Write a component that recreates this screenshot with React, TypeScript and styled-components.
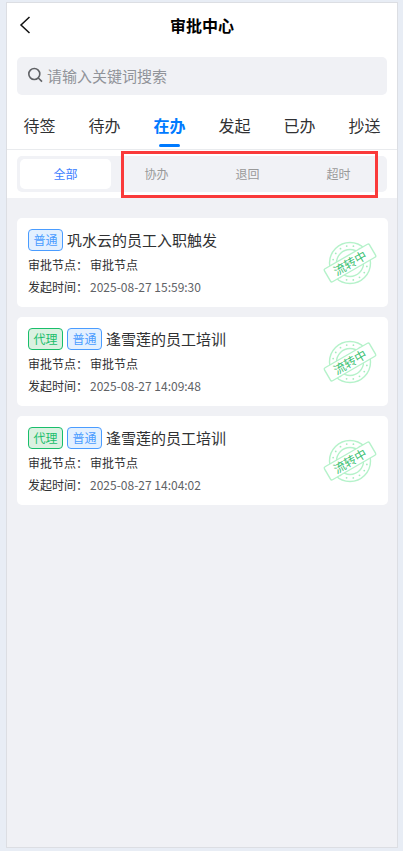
import React, { useState } from "react";
import styled, { createGlobalStyle } from "styled-components";

const GlobalStyle = createGlobalStyle`
  *, *::before, *::after { box-sizing: border-box; }
  html, body, #root { height: 100%; }
  body {
    margin: 0;
    background: #e8edf5;
    color: #303133;
    font-family: "Noto Sans CJK SC", "Noto Sans", sans-serif;
  }
  button, input { font: inherit; color: inherit; }
  button { border: 0; padding: 0; background: none; cursor: pointer; }
`;

const Shell = styled.div`
  min-height: 100%;
  padding: 2px 5px 3px 6px;
  display: flex;
`;

const Screen = styled.main`
  flex: 1;
  min-width: 0;
  display: flex;
  flex-direction: column;
  border: 1px solid #dcdee3;
  background: #f0f1f5;
`;

const TopArea = styled.div`
  background: #ffffff;
`;

const Header = styled.header`
  display: grid;
  grid-template-columns: 36px 1fr 36px;
  align-items: center;
  height: 44px;
`;

const BackButton = styled.button`
  display: flex;
  justify-content: center;
  align-items: center;
  height: 44px;
`;

const Title = styled.h1`
  margin: 0;
  text-align: center;
  font-size: 16px;
  line-height: 24px;
  font-weight: 700;
  color: #000000;
`;

const SearchBox = styled.label`
  display: flex;
  align-items: center;
  gap: 4px;
  height: 38px;
  margin: 10px 10px 8px;
  padding: 0 11px;
  border-radius: 5px;
  background: #f0f1f5;
`;

const SearchInput = styled.input`
  flex: 1;
  min-width: 0;
  padding: 0;
  border: 0;
  outline: 0;
  background: transparent;
  font-size: 15px;
  line-height: 22px;
  &::placeholder { color: #909399; opacity: 1; }
`;

const Tabs = styled.nav`
  display: flex;
  height: 47px;
  border-bottom: 1px solid #e9ebee;
`;

const Tab = styled.button<{ $active: boolean }>`
  flex: 1;
  display: flex;
  flex-direction: column;
  align-items: center;
  justify-content: space-between;
  padding: 10px 0 2px;
  font-size: 16px;
  line-height: 24px;
  font-weight: ${(p) => (p.$active ? 700 : 400)};
  color: ${(p) => (p.$active ? "#007aff" : "#303133")};
  &::after {
    content: "";
    width: 21px;
    height: 3px;
    border-radius: 2px;
    background: ${(p) => (p.$active ? "#007aff" : "transparent")};
  }
`;

const FilterArea = styled.div`
  position: relative;
  padding: 6px 10px;
`;

const Segments = styled.div`
  display: flex;
  padding: 3px;
  border-radius: 5px;
  background: #f1f2f6;
`;

const Segment = styled.button<{ $active: boolean }>`
  flex: 1;
  height: 30px;
  border-radius: 5px;
  font-size: 12px;
  line-height: 18px;
  color: ${(p) => (p.$active ? "#3c7eff" : "#999999")};
  background: ${(p) => (p.$active ? "#ffffff" : "transparent")};
`;

const Highlight = styled.div`
  position: absolute;
  inset: 1px 19px 0 114px;
  border: 3px solid #fa3a3a;
  pointer-events: none;
`;

const List = styled.section`
  display: flex;
  flex-direction: column;
  gap: 10px;
  padding: 20px 9px 20px 10px;
`;

const Card = styled.article`
  display: flex;
  align-items: center;
  justify-content: space-between;
  padding: 11px 10px 9px 11px;
  border-radius: 5px;
  background: #ffffff;
`;

const CardBody = styled.div`
  min-width: 0;
`;

const CardHead = styled.div`
  display: flex;
  align-items: center;
  gap: 4px;
  margin-bottom: 3px;
`;

const Tag = styled.span<{ $tone: "green" | "blue" }>`
  width: 35px;
  height: 22px;
  border: 1px solid;
  border-radius: 4px;
  text-align: center;
  font-size: 12px;
  line-height: 20px;
  color: ${(p) => (p.$tone === "green" ? "#19be6b" : "#4a9cff")};
  background: ${(p) => (p.$tone === "green" ? "#dbf1e1" : "#e3f0ff")};
`;

const CardTitle = styled.h2`
  margin: 0;
  font-size: 15px;
  line-height: 22px;
  font-weight: 400;
  color: #303133;
`;

const Meta = styled.p`
  display: flex;
  gap: 2px;
  margin: 0;
  font-size: 12px;
  line-height: 22px;
  color: #303133;
`;

const Time = styled.time`
  color: #606266;
`;

const StampText = styled.text`
  font-size: 12px;
  text-anchor: middle;
  fill: #3cc172;
`;

function Stamp() {
  const dots = Array.from({ length: 16 }, (_, i) => (i * Math.PI) / 8 + 0.2);
  return (
    <svg width="56" height="48" viewBox="-28 -23 56 48" role="img" aria-label="流转中">
      <g fill="none" stroke="#b5f2ca">
        <circle r="20.5" strokeWidth="1.4" />
        <circle r="13.5" strokeWidth="1.4" />
      </g>
      {dots.map((a) => (
        <circle key={a} cx={17.2 * Math.cos(a)} cy={17.2 * Math.sin(a)} r="0.9" fill="#a5edbe" />
      ))}
      <g transform="rotate(-30)">
        <rect x="-26" y="-7.5" width="52" height="15" rx="1.5" fill="#ffffff" stroke="#b5f2ca" strokeWidth="1.4" />
        <StampText x="0" y="4.5">流转中</StampText>
      </g>
    </svg>
  );
}

const tabs = ["待签", "待办", "在办", "发起", "已办", "抄送"];
const filters = ["全部", "协办", "退回", "超时"];
const records = [
  { agent: false, title: "巩水云的员工入职触发", time: "2025-08-27 15:59:30" },
  { agent: true, title: "逢雪莲的员工培训", time: "2025-08-27 14:09:48" },
  { agent: true, title: "逢雪莲的员工培训", time: "2025-08-27 14:04:02" },
];

export default function App() {
  const [tab, setTab] = useState("在办");
  const [filter, setFilter] = useState("全部");
  return (
    <>
      <GlobalStyle />
      <Shell>
        <Screen>
          <TopArea>
            <Header>
              <BackButton type="button" aria-label="返回">
                <svg width="12" height="18" viewBox="0 0 12 18" fill="none" stroke="#111111" strokeWidth="1.5">
                  <path d="M10.5 1 2 9l8.5 8" />
                </svg>
              </BackButton>
              <Title>审批中心</Title>
            </Header>
            <SearchBox>
              <svg width="15" height="18" viewBox="0 0 15 18" fill="none" stroke="#606266" strokeWidth="1.6" aria-hidden="true">
                <circle cx="6.3" cy="7" r="5.5" />
                <path d="m10.3 11 3.7 3.6" />
              </svg>
              <SearchInput type="text" placeholder="请输入关键词搜索" aria-label="请输入关键词搜索" />
            </SearchBox>
            <Tabs>
              {tabs.map((name) => (
                <Tab key={name} type="button" $active={name === tab} onClick={() => setTab(name)}>
                  {name}
                </Tab>
              ))}
            </Tabs>
            <FilterArea>
              <Segments>
                {filters.map((name) => (
                  <Segment key={name} type="button" $active={name === filter} onClick={() => setFilter(name)}>
                    {name}
                  </Segment>
                ))}
              </Segments>
              <Highlight />
            </FilterArea>
          </TopArea>
          <List>
            {records.map((r) => (
              <Card key={r.time}>
                <CardBody>
                  <CardHead>
                    {r.agent && <Tag $tone="green">代理</Tag>}
                    <Tag $tone="blue">普通</Tag>
                    <CardTitle>{r.title}</CardTitle>
                  </CardHead>
                  <Meta>
                    <span>审批节点：</span>
                    <span>审批节点</span>
                  </Meta>
                  <Meta>
                    <span>发起时间：</span>
                    <Time>{r.time}</Time>
                  </Meta>
                </CardBody>
                <Stamp />
              </Card>
            ))}
          </List>
        </Screen>
      </Shell>
    </>
  );
}
